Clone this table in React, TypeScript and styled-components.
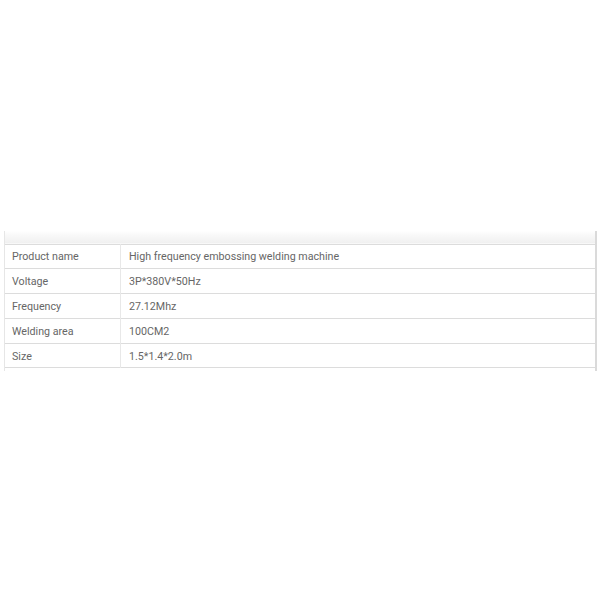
import React from "react";
import styled, { createGlobalStyle } from "styled-components";

const Global = createGlobalStyle`
  html, body {
    margin: 0;
    padding: 0;
    background: #fff;
  }
  body {
    font-family: Roboto, "Liberation Sans", Arial, sans-serif;
  }
`;

const Page = styled.div`
  width: 600px;
  height: 600px;
  padding-top: 2px;
  box-sizing: border-box;
  display: flex;
  flex-direction: column;
  justify-content: center;
`;

const Frame = styled.div`
  margin: 0 3px 0 4px;
  padding: 13px 0 3px;
  border-left: 1px solid #e6e6e6;
  border-right: 2px solid #dadada;
  background: linear-gradient(#fff 0, #fafafa 3px, #f0f0f0 12px, #fff 13px);
`;

const Table = styled.table`
  width: 100%;
  border-collapse: collapse;
  font-size: 10.7px;
  color: #666;
  background: #fff;
`;

const Row = styled.tr`
  height: 24.8px;
  border-top: 1px solid #dcdcdc;
  border-bottom: 1px solid #dcdcdc;
`;

const Cell = styled.td<{ $label?: boolean }>`
  padding: 1px 0 0 ${(p) => (p.$label ? "7px" : "8px")};
  width: ${(p) => (p.$label ? "108px" : "auto")};
  border-right: ${(p) => (p.$label ? "1px solid #e8e8e8" : "none")};
  vertical-align: middle;
`;

const specs = [
  ["Product name", "High frequency embossing welding machine"],
  ["Voltage", "3P*380V*50Hz"],
  ["Frequency", "27.12Mhz"],
  ["Welding area", "100CM2"],
  ["Size", "1.5*1.4*2.0m"],
];

const App = () => (
  <Page>
    <Global />
    <Frame>
      <Table>
        <tbody>
          {specs.map(([k, v]) => (
            <Row key={k}>
              <Cell $label>{k}</Cell>
              <Cell>{v}</Cell>
            </Row>
          ))}
        </tbody>
      </Table>
    </Frame>
  </Page>
);

export default App;
